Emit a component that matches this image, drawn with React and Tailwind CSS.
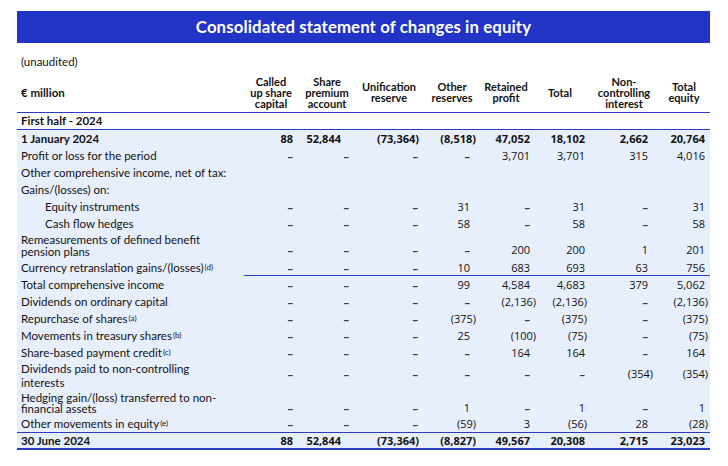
import React from "react";

const COLS = [
  { w: "w-[54px]", h: "pr-[4px]", pos: "pr-[7px]", neg: "pr-[3px]", dash: "pr-[7px]" },
  { w: "w-[56px]", h: "pr-[2px]", pos: "pr-[15px]", neg: "pr-[9px]", dash: "pr-[7px]" },
  { w: "w-[66px]", h: "", pos: "pr-[8px]", neg: "pr-[3px]", dash: "pr-[4px]" },
  { w: "w-[58px]", h: "pl-[2px]", pos: "pr-[10px]", neg: "pr-[4px]", dash: "pr-[10px]" },
  { w: "w-[60px]", h: "pr-[8px]", pos: "pr-[10px]", neg: "pr-[4px]", dash: "pr-[10px]" },
  { w: "w-[52px]", h: "pr-[12px]", pos: "pr-[7px]", neg: "pr-[5px]", dash: "pr-[7px]" },
  { w: "w-[64px]", h: "", pos: "pr-[8px]", neg: "pr-[3px]", dash: "pr-[8px]" },
  { w: "w-[54px]", h: "pl-[2px]", pos: "pr-[5px]", neg: "pr-[2px]", dash: "pr-[5px]" },
];

const HEADERS = [
  ["Called", "up share", "capital"],
  ["Share", "premium", "account"],
  ["Unification", "reserve"],
  ["Other", "reserves"],
  ["Retained", "profit"],
  ["Total"],
  ["Non-", "controlling", "interest"],
  ["Total", "equity"],
];

const D = "–";

const ROWS = [
  { label: "1 January 2024", bold: true, vals: ["88", "52,844", "(73,364)", "(8,518)", "47,052", "18,102", "2,662", "20,764"] },
  { label: "Profit or loss for the period", vals: [D, D, D, D, "3,701", "3,701", "315", "4,016"] },
  { label: "Other comprehensive income, net of tax:" },
  { label: "Gains/(losses) on:" },
  { label: "Equity instruments", indent: true, vals: [D, D, D, "31", D, "31", D, "31"] },
  { label: "Cash flow hedges", indent: true, vals: [D, D, D, "58", D, "58", D, "58"] },
  { label: ["Remeasurements of defined benefit", "pension plans"], tall: "h-[27px]", lh: "leading-[11.5px]", align: "items-end pb-[2px]", vals: [D, D, D, D, "200", "200", "1", "201"] },
  { label: "Currency retranslation gains/(losses)", sup: "(d)", underline: true, vals: [D, D, D, "10", "683", "693", "63", "756"] },
  { label: "Total comprehensive income", vals: [D, D, D, "99", "4,584", "4,683", "379", "5,062"] },
  { label: "Dividends on ordinary capital", vals: [D, D, D, D, "(2,136)", "(2,136)", D, "(2,136)"] },
  { label: "Repurchase of shares", sup: "(a)", vals: [D, D, D, "(375)", D, "(375)", D, "(375)"] },
  { label: "Movements in treasury shares", sup: "(b)", vals: [D, D, D, "25", "(100)", "(75)", D, "(75)"] },
  { label: "Share-based payment credit", sup: "(c)", vals: [D, D, D, D, "164", "164", D, "164"] },
  { label: ["Dividends paid to non-controlling", "interests"], tall: "h-[29px]", lh: "leading-[14px]", align: "items-center pb-[4px]", vals: [D, D, D, D, D, D, "(354)", "(354)"] },
  { label: ["Hedging gain/(loss) transferred to non-", "financial assets"], tall: "h-[26px]", lh: "leading-[11.5px]", align: "items-end pb-[1px]", vals: [D, D, D, "1", D, "1", D, "1"] },
  { label: "Other movements in equity", sup: "(e)", border: true, vals: [D, D, D, "(59)", "3", "(56)", "28", "(28)"] },
  { label: "30 June 2024", bold: true, bottom: true, vals: ["88", "52,844", "(73,364)", "(8,827)", "49,567", "20,308", "2,715", "23,023"] },
];

function Cell({ v, i, bold, align }) {
  const c = COLS[i];
  const isDash = v === D;
  const kind = isDash ? c.dash : v.startsWith("(") ? c.neg : c.pos;
  return (
    <div className={`${c.w} shrink-0 flex justify-end ${align} ${kind}`}>
      <span className={`font-['Open_Sans',sans-serif] text-[11px] leading-[14px] ${bold || isDash ? "font-bold" : ""} ${isDash ? "text-[#3a3a3a]" : ""}`}>{v}</span>
    </div>
  );
}

function Row({ r }) {
  const h = r.tall || "h-[17px]";
  const align = r.align || "items-center";
  const border = r.border ? "border-b border-[#2a3cc4]" : r.bottom ? "border-b-2 border-[#2a3cc4]" : "";
  return (
    <div className={`relative flex ${h} ${border}`}>
      <div className={`w-[229px] shrink-0 flex items-center ${r.indent ? "pl-[28px]" : "pl-[4px]"}`}>
        <div className={`text-[11.5px] ${r.lh || "leading-[14px]"} ${r.bold ? "font-bold" : ""} whitespace-nowrap`}>
          {Array.isArray(r.label) ? (
            r.label.map((l, k) => <div key={k}>{l}</div>)
          ) : (
            <>
              {r.label}
              {r.sup && <sup className="text-[8px] relative top-[-2px] ml-[1px]">{r.sup}</sup>}
            </>
          )}
        </div>
      </div>
      {r.vals && r.vals.map((v, i) => <Cell key={i} v={v} i={i} bold={r.bold} align={align} />)}
      {r.underline && <div className="absolute left-[227px] right-0 bottom-0 h-px bg-[#2a3cc4]" />}
    </div>
  );
}

export default function App() {
  return (
    <div className="w-[728px] h-[466px] bg-white text-[#121212] font-['Lato',sans-serif]">
      <div className="ml-[17px] w-[693px] pt-[11px]">
        <div className="h-[32px] bg-[#2234c6] flex items-center justify-center">
          <h1 className="text-white font-bold text-[16.8px] leading-none tracking-[0.1px]">Consolidated statement of changes in equity</h1>
        </div>
        <div className="pl-[4px] pt-[12px] text-[11.5px] leading-[14px]">(unaudited)</div>
        <div className="flex h-[44px] pt-[3px] items-center border-b border-[#2a3cc4] font-bold text-[11px] leading-[11px]">
          <div className="w-[229px] shrink-0 pl-[4px] text-[11.5px]">€ million</div>
          {HEADERS.map((h, i) => (
            <div key={i} className={`${COLS[i].w} shrink-0 text-center whitespace-nowrap ${COLS[i].h}`}>
              {h.map((l, k) => <div key={k}>{l}</div>)}
            </div>
          ))}
        </div>
        <div className="h-[17px] flex items-center pl-[4px] font-bold text-[11.5px] leading-[14px] border-b border-[#2a3cc4]">First half - 2024</div>
        <div className="bg-[#e7effc]">
          {ROWS.map((r, i) => <Row key={i} r={r} />)}
        </div>
      </div>
    </div>
  );
}
